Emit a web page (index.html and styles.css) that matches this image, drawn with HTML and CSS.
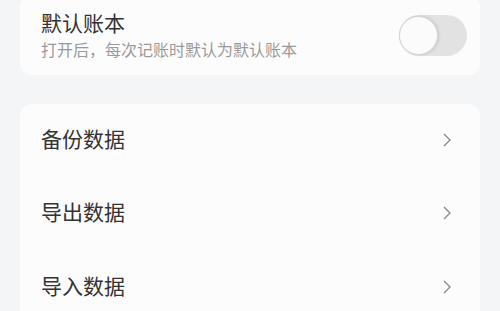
FILE: index.html
```html
<!DOCTYPE html>
<html>
<head>
    <meta charset="UTF-8">
    <title>账本设置</title>
    <link rel="stylesheet" href="styles.css">
</head>
<body>
    <div class="card top-card">
        <div class="setting-text">
            <div class="setting-title">默认账本</div>
            <div class="setting-desc">打开后，每次记账时默认为默认账本</div>
        </div>
        <div class="switch"><span class="knob"></span></div>
    </div>

    <div class="card list-card">
        <div class="row">
            <span class="row-label">备份数据</span>
            <svg class="chevron" viewBox="0 0 8 14"><path d="M1 1 L7 7 L1 13" /></svg>
        </div>
        <div class="row">
            <span class="row-label">导出数据</span>
            <svg class="chevron" viewBox="0 0 8 14"><path d="M1 1 L7 7 L1 13" /></svg>
        </div>
        <div class="row">
            <span class="row-label">导入数据</span>
            <svg class="chevron" viewBox="0 0 8 14"><path d="M1 1 L7 7 L1 13" /></svg>
        </div>
    </div>
</body>
</html>
```

FILE: styles.css
```css
body {
    font-family: "Noto Sans CJK SC", "Noto Sans", sans-serif;
    background: #f4f5f7;
    color: #333;
    margin: 0;
    padding: 0 20px;
    overflow: hidden;
}

.card {
    background: #fcfcfc;
    border-radius: 12px;
}

.top-card {
    margin-top: -6px;
    display: flex;
    align-items: center;
    justify-content: space-between;
    padding: 14px 13px 13px 21px;
}

.setting-title {
    font-size: 21px;
    line-height: 28px;
    color: #333;
}

.setting-desc {
    font-size: 16px;
    line-height: 26px;
    color: #9a9a9a;
}

.switch {
    width: 68px;
    height: 41px;
    border-radius: 21px;
    background: #e2e2e2;
    position: relative;
}

.knob {
    position: absolute;
    left: 0;
    top: 1px;
    width: 37px;
    height: 37px;
    border-radius: 50%;
    background: #fbfbfb;
    border: 1px solid #d4d4d4;
    box-shadow: 1px 0 3px rgba(0, 0, 0, 0.12);
}

.list-card {
    margin-top: 29px;
}

.row {
    height: 73.5px;
    display: flex;
    align-items: center;
    justify-content: space-between;
    padding: 0 29px 0 21px;
}

.row-label {
    font-size: 21px;
    color: #333;
    margin-bottom: 6px;
}

.chevron {
    width: 8px;
    height: 14px;
    fill: none;
    stroke: #8a8a8a;
    stroke-width: 1.4;
    margin-bottom: 2px;
}
```
